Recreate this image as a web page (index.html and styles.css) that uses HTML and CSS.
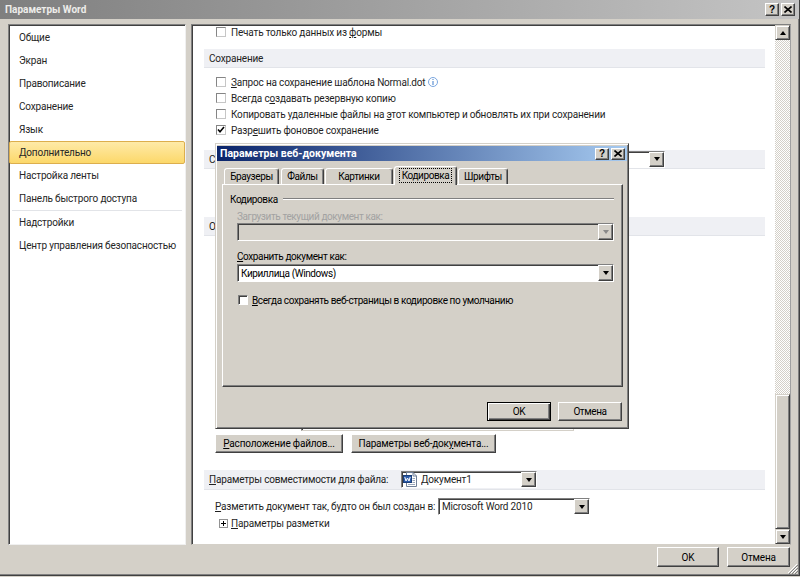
FILE: index.html
```html
<!DOCTYPE html>
<html lang="ru">
<head>
<meta charset="utf-8">
<title>Параметры Word</title>
<link rel="stylesheet" href="styles.css">
</head>
<body>
<div class="window">
  <div class="titlebar">
    <span class="title">Параметры Word</span>
    <div class="cap-btns">
      <span class="cap-btn">?</span>
      <span class="cap-btn"><svg width="8" height="7" viewBox="0 0 8 7"><path d="M0.5 0.5l7 6M7.5 0.5l-7 6" stroke="#000" stroke-width="1.6"/></svg></span>
    </div>
  </div>

  <div class="main">
    <ul class="nav">
      <li>Общие</li>
      <li>Экран</li>
      <li>Правописание</li>
      <li>Сохранение</li>
      <li>Язык</li>
      <li class="active">Дополнительно</li>
      <li>Настройка ленты</li>
      <li>Панель быстрого доступа</li>
      <li class="divider"></li>
      <li>Надстройки</li>
      <li>Центр управления безопасностью</li>
    </ul>

    <div class="frame">
      <div class="content">
        <div class="cb-row first"><span class="cb"></span><span>Печать только данных из <u>ф</u>ормы</span></div>

        <div class="sec s1">Сохранение</div>
        <div class="group g1">
          <div class="cb-row"><span class="cb"></span><span><u>З</u>апрос на сохранение шаблона Normal.dot</span><svg class="info" width="10" height="10" viewBox="0 0 10 10"><circle cx="5" cy="5" r="4.5" fill="#fff" stroke="#7aa6de"/><rect x="4.5" y="2" width="1" height="1" fill="#3f7cc9"/><rect x="4.5" y="4" width="1" height="4" fill="#3f7cc9"/></svg></div>
          <div class="cb-row"><span class="cb"></span><span>Всегда с<u>о</u>здавать резервную копию</span></div>
          <div class="cb-row"><span class="cb"></span><span>Копировать удаленные файлы на <u>э</u>тот компьютер и обновлять их при сохранении</span></div>
          <div class="cb-row"><span class="cb"><svg width="8" height="8" viewBox="0 0 8 8"><path d="M1 3.5l2 2.2 4-4.7" fill="none" stroke="#000" stroke-width="1.6"/></svg></span><span>Разр<u>е</u>шить фоновое сохранение</span></div>
        </div>

        <div class="sec s2"><span class="label-s2">С</span><span class="dd dd-s2"><span class="dd-text"></span><span class="dd-btn"><i class="arr-down"></i></span></span></div>
        <div class="hidden-block hb2"></div>

        <div class="sec">О</div>
        <div class="hidden-block hb3"></div>
        <div class="mail"><span class="textbox"></span></div>

        <div class="btn-row">
          <button class="btn btn-files"><u>Р</u>асположение файлов...</button>
          <button class="btn btn-web">Параметры веб-док<u>у</u>мента...</button>
        </div>

        <div class="sec s4"><span class="label-s4"><u>П</u>араметры совместимости для файла:</span><span class="dd dd-s4"><svg class="doc-icon" width="14" height="15" viewBox="0 0 14 15"><path d="M3.5 0.5h6.5l3.5 3.5v10.5h-10z" fill="#fff" stroke="#6f7f97"/><path d="M10 0.5v3.5h3.5" fill="none" stroke="#6f7f97"/><path d="M9.5 6.5h2.5M9.5 8.5h2.5M9.5 10.5h2.5M5 12.5h7" stroke="#9aa7ba"/><rect x="0.5" y="3.5" width="8" height="7" fill="#2a5aa8" stroke="#1b3f7a"/><path d="M1.8 5l1.2 4 1.5-3 1.5 3 1.2-4" fill="none" stroke="#fff" stroke-width="1"/></svg><span class="dd-text">Документ1</span><span class="dd-btn"><i class="arr-down"></i></span></span></div>

        <div class="row-compat"><span class="label-compat"><u>Р</u>азметить документ так, будто он был создан в:</span><span class="dd dd-word"><span class="dd-text">Microsoft Word 2010</span><span class="dd-btn"><i class="arr-down"></i></span></span></div>
        <div class="row-layout"><span class="plus"><svg width="7" height="7" viewBox="0 0 7 7"><path d="M1 3.5h5M3.5 1v5" stroke="#000"/></svg></span><span><u>П</u>араметры разметки</span></div>
      </div>

      <div class="vscroll">
        <div class="sb-btn"><i class="arr-up"></i></div>
        <div class="sb-track"></div>
        <div class="sb-thumb"></div>
        <div class="sb-btn"><i class="arr-down"></i></div>
      </div>
    </div>
  </div>

  <div class="footer">
    <button class="btn foot-ok">OK</button>
    <button class="btn foot-cancel">Отмена</button>
  </div>

  <svg class="grip" width="11" height="11" viewBox="0 0 11 11"><path d="M10 1L1 10M10 4L4 10M10 7L7 10" stroke="#fff"/><path d="M11 2L2 11M11 5L5 11M11 8L8 11" stroke="#808080"/></svg>

  <div class="dialog">
    <div class="dlg-title">
      <span>Параметры веб-документа</span>
      <div class="cap-btns">
        <span class="cap-btn small">?</span>
        <span class="cap-btn small"><svg width="8" height="7" viewBox="0 0 8 7"><path d="M0.5 0.5l7 6M7.5 0.5l-7 6" stroke="#000" stroke-width="1.6"/></svg></span>
      </div>
    </div>
    <div class="dlg-body">
      <div class="tabs">
        <span class="tab t1">Браузеры</span>
        <span class="tab t2">Файлы</span>
        <span class="tab t3">Картинки</span>
        <span class="tab t4 selected"><span class="focus">Кодировка</span></span>
        <span class="tab t5">Шрифты</span>
      </div>
      <div class="panel">
        <div class="group-head"><span>Кодировка</span><span class="etch"></span></div>
        <div class="fields">
          <div class="lbl disabled">Загрузить текущий документ как:</div>
          <div class="dd dd-dlg disabled"><span class="dd-text"></span><span class="dd-btn"><i class="arr-down gray"></i></span></div>
          <div class="lbl l2"><u>С</u>охранить документ как:</div>
          <div class="dd dd-dlg sel"><span class="dd-text">Кириллица (Windows)</span><span class="dd-btn"><i class="arr-down"></i></span></div>
          <div class="dlg-cb"><span class="cb classic"></span><span><u>В</u>сегда сохранять веб-страницы в кодировке по умолчанию</span></div>
        </div>
      </div>
      <div class="dlg-buttons">
        <button class="btn dlg-btn default">OK</button>
        <button class="btn dlg-btn">Отмена</button>
      </div>
    </div>
  </div>
</div>
</body>
</html>
```

FILE: styles.css
```css
* { box-sizing: border-box; }
html, body { margin: 0; padding: 0; }
body {
  background: #d4d0c8;
  font-family: Roboto, "Liberation Sans", Arial, sans-serif;
  font-size: 10px;
  letter-spacing: -0.18px;
  color: #1f1f1f;
}
u { text-decoration: underline; text-underline-offset: 1px; }

.window {
  position: relative;
  width: 800px;
  height: 576px;
  background: #d4d0c8;
  border-right: 1px solid #404040;
  border-bottom: 1px solid #404040;
  box-shadow: inset -1px -1px #808080;
  display: flex;
  flex-direction: column;
  overflow: hidden;
}

/* title bar */
.titlebar {
  flex: none;
  height: 19px;
  display: flex;
  align-items: center;
  justify-content: space-between;
  padding: 0 4px 0 5px;
  background: linear-gradient(to right, #7f7f7f, #c4c4c4);
}
.title { color: #eeedea; font-weight: bold; letter-spacing: 0; }
.cap-btns { display: flex; gap: 2px; }
.cap-btn {
  width: 14px;
  height: 13px;
  display: flex;
  align-items: center;
  justify-content: center;
  background: #d4d0c8;
  border: 1px solid;
  border-color: #fff #404040 #404040 #fff;
  box-shadow: inset -1px -1px #808080;
  font: bold 10px "Liberation Sans", Arial, sans-serif;
  letter-spacing: 0;
  color: #000;
  line-height: 1;
}
.cap-btn.small { height: 12px; }

/* main area */
.main { flex: none; display: flex; height: 521px; margin-top: 5px; }

.nav {
  list-style: none;
  margin: 0 0 0 8px;
  padding: 1px 0 0;
  width: 178px;
  background: #fff;
  border: 1px solid;
  border-color: #808080 #f0f0f0 #f0f0f0 #808080;
  box-shadow: inset 1px 1px #404040;
}
.nav li { height: 23px; line-height: 23px; padding-left: 10px; white-space: nowrap; color: #262626; }
.nav li.active {
  background: linear-gradient(#feeaa8, #fcd86a);
  border: 1px solid #dcae4d;
  border-radius: 2px;
  line-height: 21px;
  padding-left: 9px;
}
.nav li.divider { height: 1px; margin: 0 3px; background: #e2e4e8; }

.frame {
  margin-left: 5px;
  width: 600px;
  display: flex;
  background: #fff;
  border: 1px solid;
  border-color: #808080 #a0a0a0 #d4d0c8 #808080;
  box-shadow: inset 1px 1px #404040;
}
.content { flex: 1; min-width: 0; overflow: hidden; padding: 0 10px 0 12px; }

.cb-row { display: flex; align-items: center; height: 16px; padding-left: 12px; white-space: nowrap; }
.cb-row.first { margin-top: -1px; }
.cb {
  flex: none;
  width: 10px;
  height: 10px;
  margin-right: 5px;
  background: #fff;
  border: 1px solid;
  border-color: #858585 #c6c6c6 #c6c6c6 #858585;
  display: flex;
  align-items: center;
  justify-content: center;
}
.info { margin-left: 3px; flex: none; }

.sec {
  display: flex;
  align-items: center;
  height: 19px;
  padding-left: 5px;
  background: #eff0f4;
  border-bottom: 1px solid #e2e4e9;
  white-space: nowrap;
  color: #222;
}
.s1 { margin-top: 9px; }
.g1 { margin-top: 6px; }
.s2 { margin-top: 12px; }
.label-s2 { width: 311px; flex: none; }
.dd-s2 { width: 145px; }
.hb2 { height: 48px; }
.hb3 { height: 84px; }

.mail { display: flex; margin-top: 6px; padding-left: 97px; }
.textbox {
  width: 273px;
  height: 105px;
  background: #fff;
  border: 1px solid;
  border-color: #808080 #d4d0c8 #d4d0c8 #808080;
  box-shadow: inset 1px 1px #404040;
}

.btn-row { display: flex; gap: 8px; margin-top: 3px; padding-left: 11px; }

.btn {
  font: inherit;
  letter-spacing: inherit;
  color: #000;
  background: #d4d0c8;
  border: 1px solid;
  border-color: #fff #404040 #404040 #fff;
  box-shadow: inset -1px -1px #808080;
  padding: 0 6px;
  height: 19px;
  margin: 0;
  display: inline-flex;
  align-items: center;
  justify-content: center;
  white-space: nowrap;
}
.btn-files { width: 128px; }
.btn-web { width: 145px; }

.s4 { margin-top: 17px; height: 20px; }
.label-s4 { width: 192px; flex: none; }
.dd-s4 { width: 136px; }
.doc-icon { flex: none; margin: 0 4px 0 1px; }
.dd-s4 .dd-text { padding-left: 0; }

.row-compat { display: flex; align-items: center; height: 17px; margin-top: 8px; padding-left: 11px; white-space: nowrap; }
.label-compat { width: 223px; flex: none; }
.dd-word { width: 152px; }
.row-layout { display: flex; align-items: center; height: 14px; margin-top: 1px; padding-left: 15px; white-space: nowrap; }
.plus {
  width: 9px;
  height: 9px;
  margin-right: 3px;
  border: 1px solid #929292;
  display: flex;
  align-items: center;
  justify-content: center;
}

/* dropdowns */
.dd {
  flex: none;
  display: flex;
  align-items: center;
  height: 17px;
  background: #fff;
  border: 1px solid;
  border-color: #808080 #fff #fff #808080;
  box-shadow: inset 1px 1px #404040;
  white-space: nowrap;
}
.dd-text { flex: 1; min-width: 0; overflow: hidden; padding-left: 3px; }
.dd-btn {
  flex: none;
  align-self: stretch;
  width: 15px;
  display: flex;
  align-items: center;
  justify-content: center;
  background: #d4d0c8;
  border: 1px solid;
  border-color: #fff #404040 #404040 #fff;
  box-shadow: inset -1px -1px #808080;
}
.arr-down { display: block; width: 1px; height: 0; border-left: 3px solid transparent; border-right: 3px solid transparent; border-top: 4px solid #000; }
.arr-down.gray { border-top-color: #8a8a8a; }
.arr-up { display: block; width: 1px; height: 0; border-left: 3px solid transparent; border-right: 3px solid transparent; border-bottom: 4px solid #000; }

/* scrollbar */
.vscroll { flex: none; width: 15px; display: flex; flex-direction: column; }
.sb-btn, .sb-thumb {
  flex: none;
  background: #d4d0c8;
  border: 1px solid;
  border-color: #d4d0c8 #404040 #404040 #d4d0c8;
  box-shadow: inset 1px 1px #fff, inset -1px -1px #808080;
}
.sb-btn { height: 15px; display: flex; align-items: center; justify-content: center; }
.sb-track {
  flex: 1;
  background-color: #fff;
  background-image: conic-gradient(#d4d0c8 25%, #fff 0 50%, #d4d0c8 0 75%, #fff 0);
  background-size: 2px 2px;
}
.sb-thumb { height: 135px; }

/* footer */
.footer { flex: none; display: flex; justify-content: flex-end; gap: 8px; padding: 2px 9px 0 0; }
.foot-ok { width: 62px; height: 20px; }
.foot-cancel { width: 63px; height: 20px; }
.grip { position: absolute; right: 1px; bottom: 1px; }

/* dialog */
.dialog {
  position: absolute;
  left: 215px;
  top: 143px;
  width: 414px;
  height: 286px;
  background: #d4d0c8;
  border: 1px solid;
  border-color: #d4d0c8 #404040 #404040 #d4d0c8;
  box-shadow: inset 1px 1px #fff, inset -1px -1px #808080;
  padding: 2px 1px;
  display: flex;
  flex-direction: column;
  color: #000;
  letter-spacing: -0.4px;
}
.dlg-title {
  flex: none;
  height: 15px;
  display: flex;
  align-items: center;
  justify-content: space-between;
  padding: 0 2px 0 3px;
  background: linear-gradient(to right, #0a246a, #a6caf0);
  color: #fff;
  font-weight: bold;
  font-size: 10.5px;
  letter-spacing: 0;
}
.dlg-body { flex: 1; display: flex; flex-direction: column; padding: 5px 4px 0 5px; }

.tabs { display: flex; align-items: flex-end; height: 19px; margin-bottom: -1px; padding-left: 2px; position: relative; }
.tab {
  height: 16px;
  margin-bottom: 1px;
  display: flex;
  align-items: center;
  justify-content: center;
  background: #d4d0c8;
  border: 1px solid;
  border-bottom: 0;
  border-color: #fff #404040 transparent #fff;
  box-shadow: inset -1px 0 #808080;
  border-radius: 3px 3px 0 0;
  white-space: nowrap;
}
.tab.selected { height: 19px; margin-bottom: 0; padding-bottom: 2px; }
.t1 { width: 55px; }
.t2 { width: 43px; margin-left: 2px; }
.t3 { width: 68px; margin-left: 1px; }
.t4 { width: 63px; margin-left: 1px; }
.t5 { width: 50px; margin-left: 1px; }
.focus { outline: 1px dotted #000; outline-offset: 0; padding: 0 2px; line-height: 13px; }

.panel {
  flex: none;
  height: 203px;
  border: 1px solid;
  border-color: #fff #404040 #404040 #fff;
  box-shadow: inset -1px -1px #808080;
  padding: 8px 8px 0 7px;
}
.group-head { display: flex; align-items: center; height: 12px; }
.etch { flex: 1; margin-left: 5px; border-top: 1px solid #808080; border-bottom: 1px solid #fff; }
.fields { padding-left: 7px; }
.lbl { height: 12px; line-height: 12px; margin-top: 6px; white-space: nowrap; }
.lbl.disabled { color: #a2a2a2; }
.lbl.l2 { margin-top: 10px; }
.dd-dlg { height: 18px; }
.dd-dlg.disabled { background: #d4d0c8; }
.dd-dlg.sel { margin-top: 1px; }
.dlg-cb { display: flex; align-items: center; height: 12px; margin-top: 12px; padding-left: 1px; white-space: nowrap; }
.cb.classic {
  margin-right: 4px;
  border-color: #808080 #fff #fff #808080;
  box-shadow: inset 1px 1px #404040;
}

.dlg-buttons { display: flex; justify-content: flex-end; gap: 7px; margin-top: 15px; padding-right: 1px; }
.dlg-btn { width: 64px; height: 19px; }
.btn.default {
  border-color: #000;
  box-shadow: inset 1px 1px #fff, inset -1px -1px #404040, inset -2px -2px #808080;
}
```
